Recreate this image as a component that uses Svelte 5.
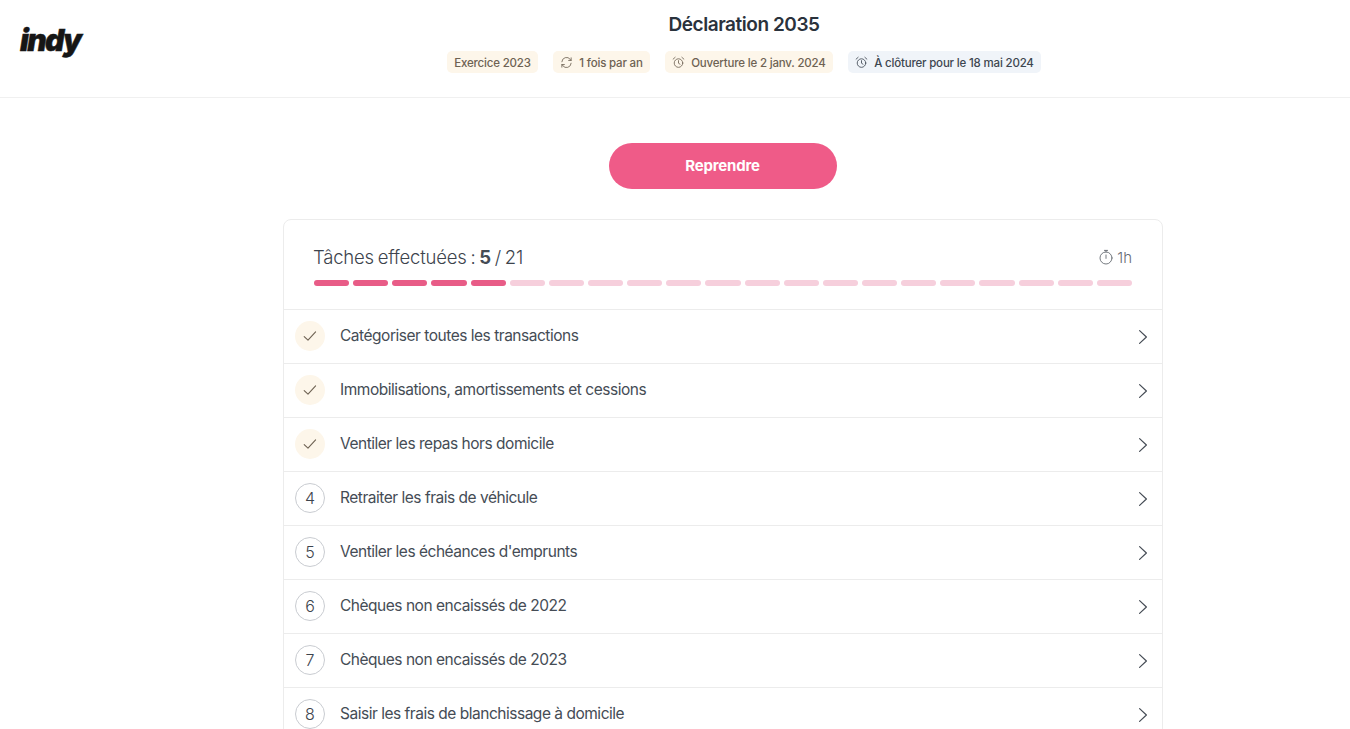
<script lang="ts">
  const tags = [
    { label: "Exercice 2023", icon: "" },
    { label: "1 fois par an", icon: "sync" },
    { label: "Ouverture le 2 janv. 2024", icon: "alarm" },
    { label: "À clôturer pour le 18 mai 2024", icon: "alarm", blue: true },
  ];

  const tasks = [
    { label: "Catégoriser toutes les transactions", done: true },
    { label: "Immobilisations, amortissements et cessions", done: true },
    { label: "Ventiler les repas hors domicile", done: true },
    { label: "Retraiter les frais de véhicule" },
    { label: "Ventiler les échéances d'emprunts" },
    { label: "Chèques non encaissés de 2022" },
    { label: "Chèques non encaissés de 2023" },
    { label: "Saisir les frais de blanchissage à domicile" },
  ];

  const total = 21;
  const doneCount = 5;
  const segments = Array.from({ length: total }, (_, i) => i < doneCount);
</script>

<header class="topbar">
  <div class="logo-col"><span class="logo">indy</span></div>
  <div class="head-center">
    <h1>Déclaration 2035</h1>
    <div class="tags">
      {#each tags as tag}
        <span class="tag" class:blue={tag.blue}>
          {#if tag.icon === "sync"}
            <svg width="13" height="13" viewBox="0 0 14 14" fill="none" stroke="currentColor" stroke-width="0.9" stroke-linecap="round" stroke-linejoin="round">
              <path d="M2 6.2A5 5 0 0 1 11 3.6L12 4.8" />
              <path d="M12 2v2.8H9.3" />
              <path d="M12 7.8A5 5 0 0 1 3 10.4L2 9.2" />
              <path d="M2 12V9.2h2.7" />
            </svg>
          {:else if tag.icon === "alarm"}
            <svg width="13" height="13" viewBox="0 0 14 14" fill="none" stroke="currentColor" stroke-width="0.9" stroke-linecap="round" stroke-linejoin="round">
              <circle cx="7" cy="7.6" r="4.6" />
              <path d="M7 5v2.8l1.6 1" />
              <path d="M1.2 3.4 3.4 1.4" />
              <path d="M12.8 3.4 10.6 1.4" />
            </svg>
          {/if}
          {tag.label}
        </span>
      {/each}
    </div>
  </div>
</header>

<main class="content">
  <button class="resume">Reprendre</button>

  <section class="card">
    <div class="card-head">
      <div class="card-title">
        <span class="progress-text">Tâches effectuées : <b>{doneCount}</b> / {total}</span>
        <span class="duration">
          <svg width="16" height="16" viewBox="0 0 16 16" fill="none" stroke="currentColor" stroke-width="0.9" stroke-linecap="round">
            <circle cx="8" cy="9" r="6" />
            <path d="M8 6v3.4" />
            <path d="M6.4 1.4h3.2" />
            <path d="M8 1.4V3" />
          </svg>
          1h
        </span>
      </div>
      <div class="bar">
        {#each segments as on}
          <span class="seg" class:on></span>
        {/each}
      </div>
    </div>

    <ul class="tasks">
      {#each tasks as task, i}
        <li class="task">
          {#if task.done}
            <span class="bullet done">
              <svg width="16" height="16" viewBox="0 0 16 16" fill="none" stroke="currentColor" stroke-width="1.1" stroke-linecap="round" stroke-linejoin="round">
                <path d="M2.2 8.6 6 12.2 13.6 3.8" />
              </svg>
            </span>
          {:else}
            <span class="bullet">{i + 1}</span>
          {/if}
          <span class="task-label">{task.label}</span>
          <svg class="chev" width="10" height="16" viewBox="0 0 10 16" fill="none" stroke="currentColor" stroke-width="1.2" stroke-linecap="round" stroke-linejoin="round">
            <path d="M1.6 1.6 8.4 8 1.6 14.4" />
          </svg>
        </li>
      {/each}
    </ul>
  </section>
</main>

<style>
  :global(body) {
    font-family: Inter, "Liberation Sans", sans-serif;
    color: #454c55;
    background: #fff;
    overflow: hidden;
  }

  .topbar {
    display: flex;
    height: 97px;
    border-bottom: 1px solid #f0f0f0;
  }

  .logo-col {
    width: 138px;
    padding: 17px 0 0 20px;
    box-sizing: border-box;
  }

  .logo {
    font-size: 30px;
    line-height: 46px;
    font-weight: 900;
    font-style: italic;
    letter-spacing: -1.7px;
    -webkit-text-stroke: 0.5px #161616;
    color: #161616;
  }

  .head-center {
    flex: 1;
    display: flex;
    flex-direction: column;
    align-items: center;
    padding-top: 13px;
  }

  h1 {
    margin: 0;
    font-size: 19px;
    line-height: 24px;
    font-weight: 600;
    letter-spacing: -0.45px;
    color: #2a323c;
  }

  .tags {
    display: flex;
    gap: 15.5px;
    margin-top: 14px;
  }

  .tag {
    display: flex;
    align-items: center;
    gap: 6px;
    height: 22px;
    padding: 1px 7px 0;
    box-sizing: border-box;
    border-radius: 5px;
    font-size: 11.5px;
    font-weight: 500;
    letter-spacing: -0.18px;
    background: #fdf6ea;
    color: #6e6253;
  }

  .tag.blue {
    background: #f0f4f9;
    color: #3d4650;
  }

  .content {
    display: flex;
    flex-direction: column;
    align-items: center;
    padding: 45px 0 0 96px;
  }

  .resume {
    width: 228px;
    height: 46px;
    margin-right: 1px;
    padding: 0 0 2px;
    border: 0;
    border-radius: 23px;
    background: #ef5b88;
    color: #fff;
    font-family: inherit;
    font-size: 15px;
    font-weight: 700;
    letter-spacing: -0.2px;
  }

  .card {
    width: 880px;
    box-sizing: border-box;
    margin-top: 30px;
    border: 1px solid #ececec;
    border-radius: 8px;
  }

  .card-head {
    height: 89px;
    box-sizing: border-box;
    padding: 24px 30px 0;
  }

  .card-title {
    display: flex;
    justify-content: space-between;
    align-items: center;
    height: 26px;
  }

  .progress-text {
    margin-left: -1px;
    font-size: 18.5px;
    font-weight: 300;
    letter-spacing: -0.2px;
    word-spacing: -1.2px;
    color: #3d444d;
  }

  .progress-text b {
    font-weight: 700;
    color: #454c55;
  }

  .duration {
    display: flex;
    align-items: center;
    gap: 3px;
    font-size: 15px;
    font-weight: 300;
    color: #666c73;
  }

  .bar {
    display: flex;
    gap: 4px;
    margin-top: 10px;
  }

  .seg {
    flex: 1;
    height: 6px;
    border-radius: 3px;
    background: #f6cfdc;
  }

  .seg.on {
    background: #e85c87;
  }

  .tasks {
    margin: 0;
    padding: 0;
    list-style: none;
  }

  .task {
    display: flex;
    align-items: center;
    height: 53.95px;
    box-sizing: border-box;
    padding: 0 14px 0 11px;
    border-top: 1px solid #ececec;
  }

  .bullet {
    display: flex;
    align-items: center;
    justify-content: center;
    width: 30px;
    height: 30px;
    box-sizing: border-box;
    flex-shrink: 0;
    border: 1px solid #c9ccd1;
    border-radius: 50%;
    font-size: 16px;
    font-weight: 300;
    color: #3d444d;
  }

  .bullet.done {
    border: 0;
    background: #fdf6ea;
    color: #6e6253;
  }

  .task-label {
    flex: 1;
    margin-left: 15px;
    padding-bottom: 2px;
    font-size: 15.5px;
    font-weight: 400;
    letter-spacing: -0.48px;
    color: #454c55;
  }

  .chev {
    margin-top: 1px;
    color: #454c55;
  }
</style>
